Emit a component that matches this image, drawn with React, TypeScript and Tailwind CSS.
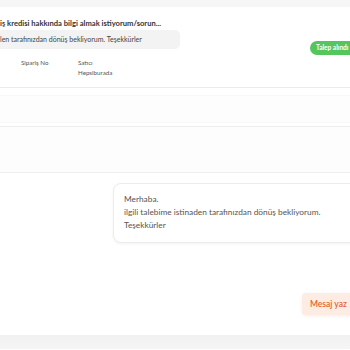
export default function App() {
  return (
    <div className="w-[350px] h-[350px] overflow-hidden bg-white font-['Lato','Open_Sans',sans-serif] text-[#333]">
      <div className="h-[7px] bg-[#f6f6f6]" />

      {/* Request summary */}
      <div className="h-[81px] border-b border-[#ebebeb] relative">
        <div className="pt-[11px] text-[7.6px] font-bold leading-[10px] text-[#333] whitespace-nowrap">
          iş kredisi hakkında bilgi almak istiyorum/sorun...
        </div>
        <div className="mt-[2px] w-[180px] h-[19px] rounded-r-[5px] bg-[#f3f3f3] flex items-center">
          <span className="text-[7px] text-[#444] whitespace-nowrap">len tarafınızdan dönüş bekliyorum. Teşekkürler</span>
        </div>
        <span className="absolute left-[310px] top-[34px] h-[14px] pl-[6px] pr-[10px] rounded-full bg-[#55c65d] text-white text-[6.5px] font-bold flex items-center whitespace-nowrap">
          Talep alındı
        </span>
        <div className="mt-[9px] flex text-[6.2px] text-[#555] leading-[10px]">
          <div className="ml-[21px] w-[57px]">Sipariş No</div>
          <div>
            <div>Satıcı</div>
            <div>Hepsiburada</div>
          </div>
        </div>
      </div>

      {/* Empty rows */}
      <div className="h-[7px]" />
      <div className="h-[28px] border-y border-[#f8f8f8] bg-[#fdfdfd]" />
      <div className="h-[3px]" />
      <div className="h-[47px] border-t border-[#eeeeee] bg-[#fdfdfd] border-b" />

      {/* Conversation */}
      <div className="h-[162px] relative">
        <div className="absolute left-[113px] top-[10px] w-[260px] h-[60px] rounded-[8px] border border-[#ececec] bg-white shadow-[0_1px_3px_rgba(0,0,0,0.05)] pl-[10px] pt-[9px] text-[8.3px] leading-[13px] text-[#555] whitespace-nowrap">
          <div>Merhaba.</div>
          <div>ilgili talebime istinaden tarafınızdan dönüş bekliyorum.</div>
          <div>Teşekkürler</div>
        </div>
        <button className="absolute left-[302px] top-[120px] h-[22px] w-[60px] rounded-[4px] bg-[#fdece4] text-[#e5632e] text-[8.5px] font-semibold pl-[8px] text-left shadow-[0_1px_3px_rgba(229,99,46,0.12)]">
          Mesaj yaz
        </button>
      </div>

      <div className="h-[14px] bg-gradient-to-b from-[#f1f1f1] to-[#f5f5f5]" />
    </div>
  );
}
